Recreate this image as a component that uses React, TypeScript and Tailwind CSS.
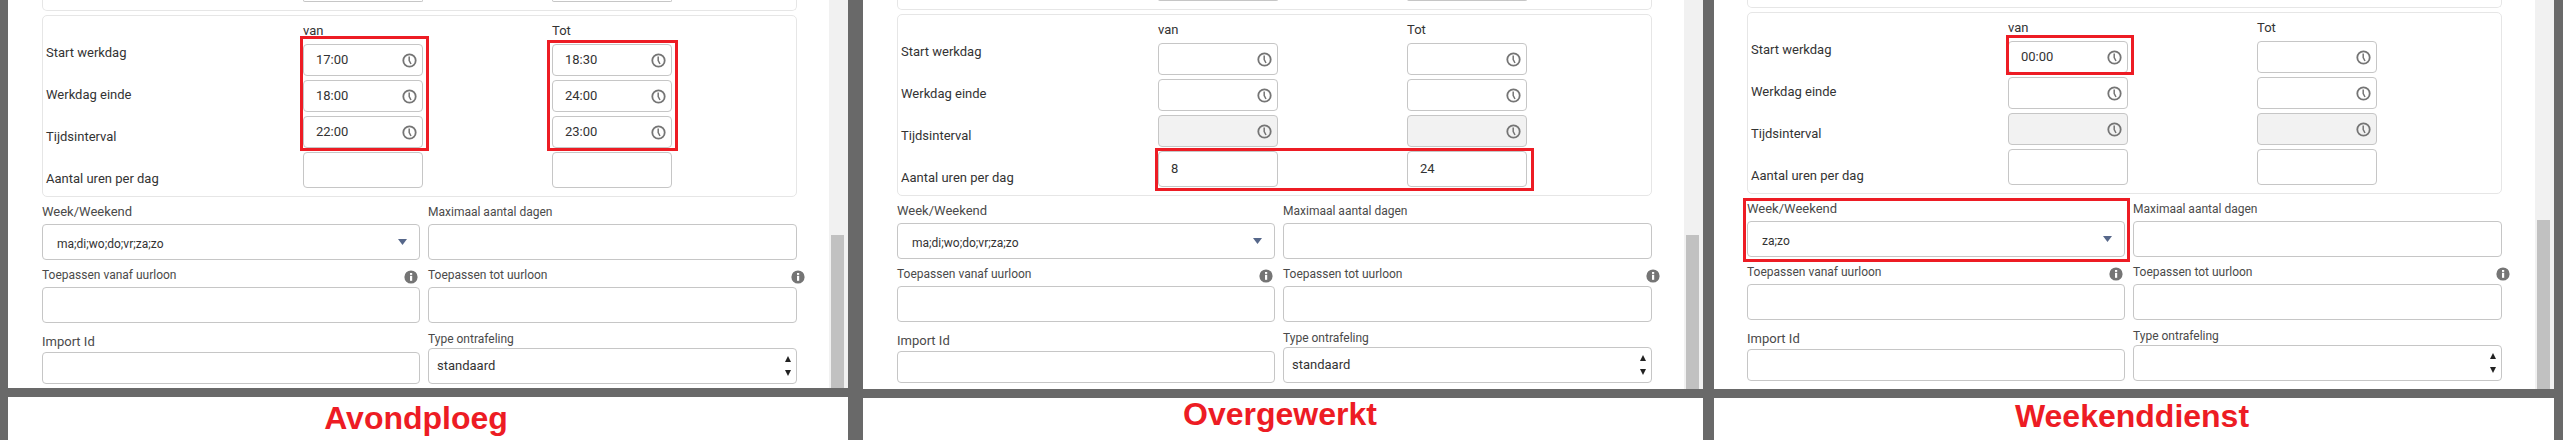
import React from "react";

const Clock = () => (
  <svg width="15" height="15" viewBox="0 0 15 15" className="shrink-0" fill="none">
    <circle cx="7.5" cy="7.5" r="6.2" stroke="#757575" strokeWidth="1.8" />
    <path d="M7.2 3.6V7.6L9 11" stroke="#757575" strokeWidth="1.5" />
  </svg>
);

const Info = () => (
  <svg width="14" height="14" viewBox="0 0 14 14" className="shrink-0 mt-[3px]">
    <circle cx="7" cy="7" r="6.6" fill="#757575" />
    <rect x="6" y="5.8" width="2.2" height="5" fill="#fff" />
    <rect x="6" y="3" width="2.2" height="1.9" fill="#fff" />
  </svg>
);

const base = "border border-[#c6c6c6] rounded-[4px] text-[#333]";

function TimeBox({ value, disabled }: { value?: string; disabled?: boolean }) {
  return (
    <div className={`${base} h-[32px] w-[120px] flex items-center justify-between pl-[12px] pr-[5px] ${disabled ? "bg-[#f2f2f2]" : "bg-white"}`}>
      <span>{value}</span>
      <Clock />
    </div>
  );
}

function Column({ head, times, hours }: { head: string; times: (string | undefined)[]; hours?: string }) {
  return (
    <div className="w-[120px] flex flex-col gap-[4px]">
      <div className="h-[24px] pt-[6px] leading-[18px] text-[#333]">{head}</div>
      <TimeBox value={times[0]} />
      <TimeBox value={times[1]} />
      <TimeBox value={times[2]} disabled={!times[2]} />
      <div className={`${base} bg-white h-[36px] flex items-center pl-[12px]`}>{hours}</div>
    </div>
  );
}

type Data = {
  from: (string | undefined)[];
  to: (string | undefined)[];
  hoursFrom?: string;
  hoursTo?: string;
  week: string;
  type?: string;
};

function Form({ d, shift }: { d: Data; shift: string }) {
  return (
    <div className={`w-[755px] text-[13px] leading-[16px] ${shift}`} style={{ fontFamily: 'Roboto, "Noto Sans", sans-serif' }}>
      <div className="h-[11px] border-x border-b border-[#e6e6e6] rounded-b-[5px] flex pl-[260px] mb-[4px]">
        <div className="w-[120px] h-[2px] border-x border-b border-[#c6c6c6] rounded-b-[3px]" />
        <div className="w-[120px] h-[2px] border-x border-b border-[#c6c6c6] rounded-b-[3px] ml-[129px]" />
      </div>
      <div className="h-[182px] border border-[#e6e6e6] rounded-[5px] flex pl-[3px] pt-0">
        <div className="w-[257px] pt-[16px] text-[#333]">
          {["Start werkdag", "Werkdag einde", "Tijdsinterval", "Aantal uren per dag"].map((t) => (
            <div key={t} className="h-[42px] flex items-center">{t}</div>
          ))}
        </div>
        <Column head="van" times={d.from} hours={d.hoursFrom} />
        <div className="w-[129px]" />
        <Column head="Tot" times={d.to} hours={d.hoursTo} />
      </div>

      <div className="grid grid-cols-[378px_369px] gap-x-[8px] items-end text-[#4a4a4a]">
        <div>
          <div className="h-[27px] pt-[7px]">Week/Weekend</div>
          <div className={`${base} bg-white h-[36px] flex items-center justify-between pl-[14px] pr-[12px]`}>
            <span className="pt-[4px] text-[12px]">{d.week}</span>
            <svg width="9" height="6" viewBox="0 0 9 6" className="mb-[1px]"><path d="M0 0H9L4.5 6Z" fill="#56678a" /></svg>
          </div>
        </div>
        <div>
          <div className="h-[27px] pt-[7px] text-[12px]">Maximaal aantal dagen</div>
          <div className={`${base} bg-white h-[36px]`} />
        </div>
        <div>
          <div className="h-[27px] pt-[7px] text-[12px] flex justify-between pr-[2px]"><span>Toepassen vanaf uurloon</span><Info /></div>
          <div className={`${base} bg-white h-[36px]`} />
        </div>
        <div>
          <div className="h-[27px] pt-[7px] text-[12px] flex justify-between -mr-[8px]"><span>Toepassen tot uurloon</span><Info /></div>
          <div className={`${base} bg-white h-[36px]`} />
        </div>
        <div>
          <div className="h-[29px] pt-[11px]">Import Id</div>
          <div className={`${base} bg-white h-[32px]`} />
        </div>
        <div>
          <div className="h-[25px] pt-[8px] text-[12px]">Type ontrafeling</div>
          <div className={`${base} bg-white h-[36px] flex items-center justify-between pl-[8px] pr-[5px]`}>
            <span>{d.type}</span>
            <div className="flex flex-col gap-[8px]">
              <svg width="6" height="6" viewBox="0 0 6 6"><path d="M3 0L6 6H0Z" fill="#222" /></svg>
              <svg width="6" height="6" viewBox="0 0 6 6"><path d="M0 0H6L3 6Z" fill="#222" /></svg>
            </div>
          </div>
        </div>
      </div>
    </div>
  );
}

function Mark({ className }: { className: string }) {
  return <div className={`absolute border-[3px] border-[#ed1c24] ${className}`} />;
}

function Panel({
  title, d, shift, inset, height, thumb, titleClass, children, className,
}: {
  title: string; d: Data; shift: string; inset: string; height: string; thumb: string;
  titleClass: string; children: React.ReactNode; className: string;
}) {
  return (
    <div className={`w-[840px] flex flex-col shrink-0 ${className}`}>
      <div className={`relative flex bg-white overflow-hidden ${height}`}>
        <div className={`w-[821px] ${inset}`}>
          <Form d={d} shift={shift} />
        </div>
        <div className="w-[19px] bg-[#f1f1f1] flex flex-col justify-end pl-[2px] pr-[4px]">
          <div className={`bg-[#c1c1c1] ${thumb}`} />
        </div>
        {children}
      </div>
      <div className={`mt-[9px] flex-1 bg-white flex justify-center font-bold text-[#ed1c24] ${titleClass}`} style={{ fontFamily: '"Liberation Sans", Arial, sans-serif' }}>
        {title}
      </div>
    </div>
  );
}

export default function App() {
  return (
    <div className="w-[2563px] h-[440px] bg-[#696969] pl-[8px] flex overflow-hidden">
      <Panel
        className=""
        title="Avondploeg"
        titleClass="text-[32px] leading-[36px] pt-[3px] pr-[24px]"
        shift=""
        inset="pl-[34px]"
        height="h-[388px]"
        thumb="h-[153px]"
        d={{ from: ["17:00", "18:00", "22:00"], to: ["18:30", "24:00", "23:00"], week: "ma;di;wo;do;vr;za;zo", type: "standaard" }}
      >
        <Mark className="left-[292px] top-[36px] w-[129px] h-[115px]" />
        <Mark className="left-[539px] top-[40px] w-[131px] h-[111px]" />
      </Panel>
      <Panel
        className="ml-[15px]"
        title="Overgewerkt"
        titleClass="text-[32px] leading-[32px] pr-[6px]"
        shift="-mt-px"
        inset="pl-[34px]"
        height="h-[389px]"
        thumb="h-[154px]"
        d={{ from: [undefined, undefined, undefined], to: [undefined, undefined, undefined], hoursFrom: "8", hoursTo: "24", week: "ma;di;wo;do;vr;za;zo", type: "standaard" }}
      >
        <Mark className="left-[292px] top-[148px] w-[379px] h-[43px]" />
      </Panel>
      <Panel
        className="ml-[11px]"
        title="Weekenddienst"
        titleClass="text-[32px] leading-[36px] pr-[4px]"
        shift="-mt-[3px]"
        inset="pl-[33px]"
        height="h-[389px]"
        thumb="h-[169px]"
        d={{ from: ["00:00", undefined, undefined], to: [undefined, undefined, undefined], week: "za;zo" }}
      >
        <Mark className="left-[292px] top-[35px] w-[128px] h-[40px]" />
        <Mark className="left-[29px] top-[198px] w-[387px] h-[64px]" />
      </Panel>
    </div>
  );
}
